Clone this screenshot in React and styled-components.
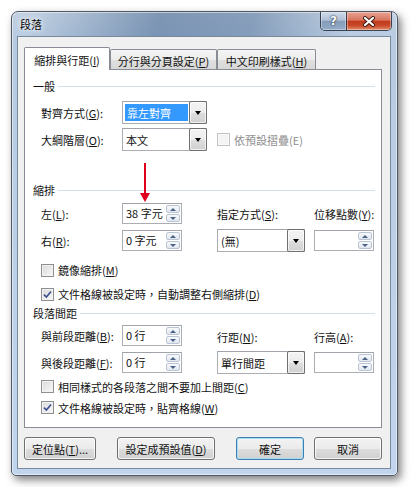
import React from "react";
import styled, { createGlobalStyle } from "styled-components";

const GlobalStyle = createGlobalStyle`
  html, body {
    margin: 0;
    background: #fff;
  }

  body {
    font-family: "Noto Sans CJK TC", "Liberation Sans", sans-serif;
    font-size: 11px;
    line-height: 16px;
    color: #111;
  }
`;

const Page = styled.div`
  padding: 11px;
`;

const Window = styled.div`
  width: 387px;
  box-sizing: border-box;
  border: 1px solid #505963;
  border-radius: 7px 7px 5px 5px;
  background:
    linear-gradient(100deg, rgba(255, 255, 255, 0) 5%, rgba(45, 80, 125, 0.45) 38%, rgba(45, 80, 125, 0.38) 62%, rgba(255, 255, 255, 0) 88%) top / 100% 26px no-repeat,
    linear-gradient(#c2d1e2, #b6cae1 30px, #c1d6ee);
  box-shadow: inset 0 0 0 1px rgba(255, 255, 255, 0.5), 3px 4px 9px rgba(0, 0, 0, 0.5);
`;

const TitleBar = styled.div`
  height: 24px;
  display: flex;
  justify-content: space-between;
  padding-left: 8px;
`;

const Title = styled.div`
  align-self: center;
  font-size: 11px;
  color: #000;
  text-shadow: 0 0 6px rgba(255, 255, 255, 0.95), 0 0 3px rgba(255, 255, 255, 0.9);
`;

const CaptionButtons = styled.div`
  display: flex;
  height: 18px;
  margin-right: 5px;
  border: 1px solid rgba(35, 45, 60, 0.85);
  border-top: none;
  border-radius: 0 0 5px 5px;
  overflow: hidden;
`;

const CaptionButton = styled.div`
  width: ${(p) => p.$w}px;
  display: flex;
  align-items: center;
  justify-content: center;
  box-shadow: inset 0 0 0 1px rgba(255, 255, 255, 0.35);
  background: ${(p) =>
    p.$close
      ? "linear-gradient(#e9a393 0%, #d8765f 45%, #c23a1e 52%, #c8482a 75%, #e3906a 100%)"
      : "linear-gradient(#cfdbe9 0%, #b0c1d6 45%, #869db9 52%, #94acc8 100%)"};
  border-left: ${(p) => (p.$close ? "1px solid rgba(35, 45, 60, 0.85)" : "none")};
  color: #fff;
  font-family: "DejaVu Sans", sans-serif;
  font-weight: bold;
  font-size: 12px;
  text-shadow: 0 0 2px #1d2a3a, 0 0 1px #1d2a3a;
`;

const Frame = styled.div`
  padding: 0 6px 6px 5px;
`;

const Client = styled.div`
  border: 1px solid #7a8a9d;
  background: #f0f0f0;
  padding: 10px 8px 8px 6px;
`;

const TabRow = styled.div`
  display: flex;
  align-items: flex-end;
  height: 23px;
  margin-bottom: -1px;
`;

const Tab = styled.div`
  width: ${(p) => p.$w}px;
  height: ${(p) => (p.$active ? 23 : 21)}px;
  box-sizing: border-box;
  padding-top: ${(p) => (p.$active ? 4 : 3)}px;
  text-align: center;
  border: 1px solid #898c95;
  border-bottom: none;
  border-radius: 2px 2px 0 0;
  background: ${(p) =>
    p.$active ? "#fff" : "linear-gradient(#f5f5f5, #ececec 50%, #e0e0e0 51%, #d6d6d6)"};
  position: relative;
  z-index: ${(p) => (p.$active ? 1 : 0)};
`;

const Panel = styled.div`
  position: relative;
  height: 359px;
  box-sizing: border-box;
  border: 1px solid #898c95;
  background: #fff;
  padding: 8px 6px 0 8px;
`;

const GroupTitle = styled.div`
  display: flex;
  align-items: center;
  gap: 3px;
  height: 16px;
  margin-top: ${(p) => p.$mt || 0}px;

  &::after {
    content: "";
    flex: 1;
    height: 1px;
    background: #d5dfe8;
  }
`;

const FieldGrid = styled.div`
  display: grid;
  grid-template-columns: 81px 95px 97px 60px;
  grid-auto-rows: 23px;
  row-gap: 4px;
  align-items: center;
  margin: ${(p) => p.$mt}px 0 0 8px;
`;

const Label = styled.div`
  white-space: nowrap;
  padding-top: ${(p) => (p.$low ? 3 : 0)}px;
`;

const Key = styled.span`
  text-decoration: underline;
  text-underline-offset: 1px;
`;

const Combo = styled.div`
  width: ${(p) => p.$w}px;
  height: 23px;
  box-sizing: border-box;
  display: flex;
  border: 1px solid #abadb3;
  border-top-color: #a0a3aa;
  background: #fff;
`;

const ComboText = styled.div`
  flex: 1;
  display: flex;
  align-items: center;
  padding: 2px 1px 2px ${(p) => (p.$selected ? 2 : 3)}px;
`;

const Highlight = styled.span`
  flex: 1;
  align-self: stretch;
  display: flex;
  align-items: center;
  padding-left: 2px;
  background: #3399ff;
  color: #fff;
`;

const DropButton = styled.div`
  width: 16px;
  margin: -1px -1px -1px 0;
  border: 1px solid #707070;
  border-radius: 2px;
  background: linear-gradient(#f4f4f4, #ececec 50%, #dedede 51%, #d0d0d0);
  box-shadow: inset 0 0 0 1px rgba(255, 255, 255, 0.7);
  display: flex;
  align-items: center;
  justify-content: center;

  &::after {
    content: "";
    border-left: 3px solid transparent;
    border-right: 3px solid transparent;
    border-top: 4px solid #000;
  }
`;

const SpinBox = styled.div`
  width: 60px;
  height: 21px;
  box-sizing: border-box;
  display: flex;
  border: 1px solid #abadb3;
  border-top-color: #a0a3aa;
  background: #fff;
`;

const SpinText = styled.div`
  flex: 1;
  padding-left: 3px;
  line-height: 19px;
`;

const SpinButtons = styled.div`
  width: 14px;
  display: flex;
  flex-direction: column;
  gap: 1px;
  padding: 1px 1px 1px 0;
`;

const SpinButton = styled.div`
  flex: 1;
  border: 1px solid #bac4d2;
  border-radius: 2px;
  background: linear-gradient(#f7f9fc, #e1e7ef);
  display: flex;
  align-items: center;
  justify-content: center;

  &::after {
    content: "";
    border-left: 3px solid transparent;
    border-right: 3px solid transparent;
    border-${(p) => (p.$down ? "top" : "bottom")}: 3px solid #4c6186;
  }
`;

const CheckList = styled.div`
  margin-top: ${(p) => p.$mt}px;
  padding-left: 8px;
  display: grid;
  grid-auto-rows: ${(p) => p.$h}px;
  align-items: center;
`;

const CheckRow = styled.div`
  display: flex;
  align-items: center;
  gap: 4px;
  white-space: nowrap;
  color: ${(p) => (p.$disabled ? "#8d8d8d" : "inherit")};
`;

const Box = styled.span`
  width: 13px;
  height: 13px;
  box-sizing: border-box;
  flex: none;
  border: 1px solid ${(p) => (p.$disabled ? "#c2c2c2" : "#8e8f8f")};
  background: ${(p) =>
    p.$disabled ? "#f4f4f4" : "linear-gradient(135deg, #d9d9d9, #f9f9f9)"};
  box-shadow: inset 0 0 0 1px ${(p) => (p.$disabled ? "#fafafa" : "#f2f2f2")};
  display: flex;
  align-items: center;
  justify-content: center;
`;

const ButtonRow = styled.div`
  display: flex;
  gap: 21px;
  margin-top: 9px;
`;

const ActionGroup = styled.div`
  display: flex;
  gap: 10px;
`;

const Button = styled.div`
  width: ${(p) => p.$w}px;
  height: 23px;
  box-sizing: border-box;
  display: flex;
  align-items: center;
  justify-content: center;
  border: 1px solid ${(p) => (p.$default ? "#3c7fb1" : "#707070")};
  border-radius: 3px;
  background: linear-gradient(#f3f3f3, #ebebeb 50%, #dddddd 51%, #d0d0d0);
  box-shadow: inset 0 0 0 1px ${(p) => (p.$default ? "#a9dcf5" : "rgba(255, 255, 255, 0.75)")};
  white-space: nowrap;
`;

const Arrow = styled.svg`
  position: absolute;
  left: 115px;
  top: 93px;
`;

function CheckBox({ checked, disabled, children }) {
  return (
    <CheckRow $disabled={disabled}>
      <Box $disabled={disabled}>
        {checked && (
          <svg width="9" height="9" viewBox="0 0 9 9">
            <path d="M1 4.6 L3.4 7 L8 1.4" fill="none" stroke="#3a4f8e" strokeWidth="1.6" />
          </svg>
        )}
      </Box>
      <span>{children}</span>
    </CheckRow>
  );
}

function Spinner({ value }) {
  return (
    <SpinBox>
      <SpinText>{value}</SpinText>
      <SpinButtons>
        <SpinButton />
        <SpinButton $down />
      </SpinButtons>
    </SpinBox>
  );
}

function Dropdown({ width, value, selected }) {
  return (
    <Combo $w={width}>
      <ComboText $selected={selected}>
        {selected ? <Highlight>{value}</Highlight> : value}
      </ComboText>
      <DropButton />
    </Combo>
  );
}

export default function App() {
  return (
    <Page>
      <GlobalStyle />
      <Window>
        <TitleBar>
          <Title>段落</Title>
          <CaptionButtons>
            <CaptionButton $w={25}>?</CaptionButton>
            <CaptionButton $w={44} $close>
              <svg width="14" height="11" viewBox="0 0 14 11">
                <path d="M3 2 L11 9 M11 2 L3 9" stroke="#3a1a12" strokeWidth="4" strokeLinecap="round" />
                <path d="M3 2 L11 9 M11 2 L3 9" stroke="#fff" strokeWidth="2.2" strokeLinecap="round" />
              </svg>
            </CaptionButton>
          </CaptionButtons>
        </TitleBar>
        <Frame>
          <Client>
            <TabRow>
              <Tab $w={86} $active>
                縮排與行距(<Key>I</Key>)
              </Tab>
              <Tab $w={107}>
                分行與分頁設定(<Key>P</Key>)
              </Tab>
              <Tab $w={99}>
                中文印刷樣式(<Key>H</Key>)
              </Tab>
            </TabRow>
            <Panel>
              <GroupTitle>一般</GroupTitle>
              <FieldGrid $mt={7}>
                <Label>
                  對齊方式(<Key>G</Key>):
                </Label>
                <Dropdown width={85} value="靠左對齊" selected />
                <span />
                <span />
                <Label>
                  大綱階層(<Key>O</Key>):
                </Label>
                <Dropdown width={85} value="本文" />
                <CheckBox disabled>依預設摺疊(E)</CheckBox>
              </FieldGrid>

              <GroupTitle $mt={31}>縮排</GroupTitle>
              <FieldGrid $mt={4}>
                <Label>
                  左(<Key>L</Key>):
                </Label>
                <Spinner value="38 字元" />
                <Label>
                  指定方式(<Key>S</Key>):
                </Label>
                <Label>
                  位移點數(<Key>Y</Key>):
                </Label>
                <Label>
                  右(<Key>R</Key>):
                </Label>
                <Spinner value="0 字元" />
                <Dropdown width={88} value="(無)" />
                <Spinner value="" />
              </FieldGrid>
              <CheckList $mt={6} $h={24}>
                <CheckBox>
                  鏡像縮排(<Key>M</Key>)
                </CheckBox>
                <CheckBox checked>
                  文件格線被設定時，自動調整右側縮排(<Key>D</Key>)
                </CheckBox>
              </CheckList>

              <GroupTitle $mt={-1}>段落間距</GroupTitle>
              <FieldGrid $mt={3}>
                <Label>
                  與前段距離(<Key>B</Key>):
                </Label>
                <Spinner value="0 行" />
                <Label $low>
                  行距(<Key>N</Key>):
                </Label>
                <Label $low>
                  行高(<Key>A</Key>):
                </Label>
                <Label>
                  與後段距離(<Key>F</Key>):
                </Label>
                <Spinner value="0 行" />
                <Dropdown width={88} value="單行間距" />
                <Spinner value="" />
              </FieldGrid>
              <CheckList $mt={2} $h={21}>
                <CheckBox>
                  相同樣式的各段落之間不要加上間距(<Key>C</Key>)
                </CheckBox>
                <CheckBox checked>
                  文件格線被設定時，貼齊格線(<Key>W</Key>)
                </CheckBox>
              </CheckList>

              <Arrow width="10" height="40" viewBox="0 0 10 40">
                <rect x="4" y="0" width="2" height="31" fill="#e1001b" />
                <polygon points="0,30 10,30 5,39" fill="#e1001b" />
              </Arrow>
            </Panel>
            <ButtonRow>
              <Button $w={72}>
                定位點(<Key>T</Key>)...
              </Button>
              <Button $w={98}>
                設定成預設值(<Key>D</Key>)
              </Button>
              <ActionGroup>
                <Button $w={68} $default>
                  確定
                </Button>
                <Button $w={68}>取消</Button>
              </ActionGroup>
            </ButtonRow>
          </Client>
        </Frame>
      </Window>
    </Page>
  );
}
